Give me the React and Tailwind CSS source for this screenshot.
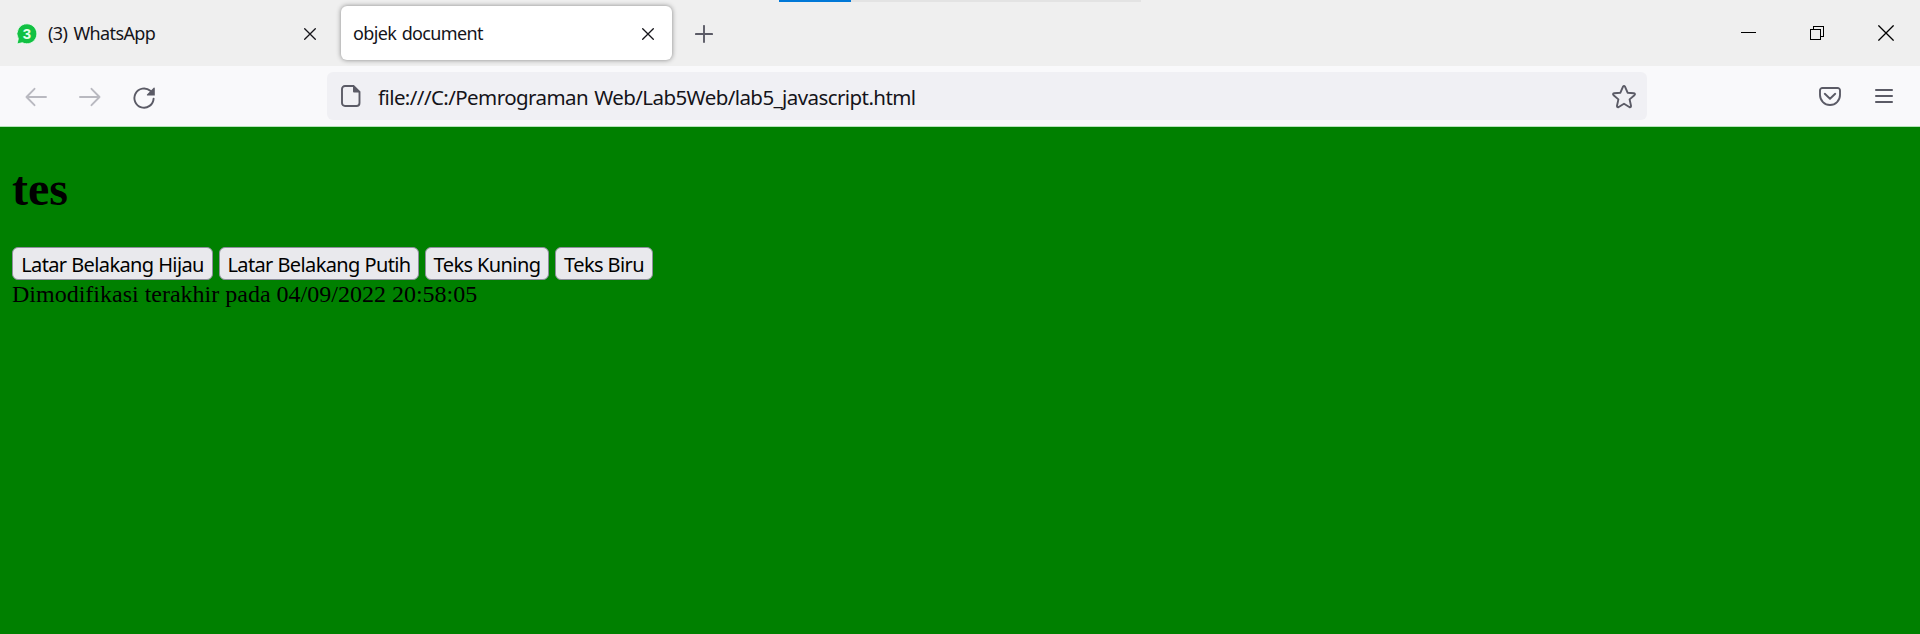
const buttons = [
  { label: 'Latar Belakang Hijau', width: 'w-[201px]' },
  { label: 'Latar Belakang Putih', width: 'w-[200px]' },
  { label: 'Teks Kuning', width: 'w-[124px]' },
  { label: 'Teks Biru', width: 'w-[98px]' },
];

function CloseIcon() {
  return (
    <svg className="h-3 w-3 shrink-0" viewBox="0 0 12 12" fill="none" stroke="#15141a" strokeWidth="1.3" strokeLinecap="round">
      <path d="M.7.7l10.6 10.6M11.3.7L.7 11.3" />
    </svg>
  );
}

function TabBar() {
  return (
    <div className="relative flex h-[66px] items-center bg-[#efefef] text-[18px] text-[#15141a]">
      <div className="absolute top-0 left-[779px] flex h-[2px] w-[362px] bg-[#e3e3e3]">
        <div className="w-[72px] bg-[#0078d7]" />
      </div>
      <div className="flex h-[54px] w-[341px] items-center pt-px pl-4">
        <svg className="h-[22px] w-[22px] shrink-0" viewBox="0 0 22 22">
          <path d="M11 .8a10 10 0 1 1-4.700 18.900L1 21l1.300-5.200A10 10 0 0 1 11 .8z" fill="#12c143" stroke="#f8fff9" strokeWidth=".8" />
          <text x="11" y="16.200" textAnchor="middle" fontFamily="Liberation Sans, sans-serif" fontWeight="700" fontSize="15" fill="#e6ffe9">3</text>
        </svg>
        <span className="ml-2.5 w-[256px] whitespace-nowrap tracking-[-0.6px] [word-spacing:2px]">(3) WhatsApp</span>
        <CloseIcon />
      </div>
      <div className="flex h-[54px] w-[331px] items-center rounded-md bg-white pt-px pl-3 shadow-[0_0_5px_rgba(0,0,0,0.45)]">
        <span className="w-[289px] whitespace-nowrap tracking-[-0.65px] [word-spacing:1.500px]">objek document</span>
        <CloseIcon />
      </div>
      <svg className="mt-[2px] ml-[23px] h-[18px] w-[18px]" viewBox="0 0 18 18" fill="none" stroke="#5b5b66" strokeWidth="1.9" strokeLinecap="round">
        <path d="M9 .9v16.2M.9 9h16.2" />
      </svg>
      <div className="ml-auto flex h-[18px] items-center pr-[26px]">
        <svg className="h-[16px] w-[15px]" viewBox="0 0 15 16" shapeRendering="crispEdges"><path d="M0 7h15v1H0z" fill="#000" /></svg>
        <svg className="ml-[54px] h-[14px] w-[14px]" viewBox="0 0 14 14" fill="none" stroke="#000" shapeRendering="crispEdges">
          <path d="M.5 3.5h10v10H.5zM3.500 3.500v-3h10v10h-3" />
        </svg>
        <svg className="ml-[54px] h-4 w-4" viewBox="0 0 16 16" fill="none" stroke="#000" strokeWidth="1.3"><path d="M.4.4l15.200 15.200M15.600.4L.4 15.600" /></svg>
      </div>
    </div>
  );
}

function Toolbar() {
  return (
    <div className="flex h-[61px] items-center border-b border-[#b5e3ba] bg-[#f9f9fb]">
      <div className="flex w-[327px] items-center pt-[2px] pl-[25px]">
        <svg className="h-5 w-[22px]" viewBox="0 0 22 20" fill="none" stroke="#b9b9c0" strokeWidth="1.9" strokeLinecap="round" strokeLinejoin="round">
          <path d="M21 10H1.500M9.500 1.800L1.500 10l8 8.200" />
        </svg>
        <svg className="ml-8 h-5 w-[22px]" viewBox="0 0 22 20" fill="none" stroke="#b9b9c0" strokeWidth="1.9" strokeLinecap="round" strokeLinejoin="round">
          <path d="M1 10h19.500M12.500 1.800l8 8.200-8 8.200" />
        </svg>
        <svg className="mt-[2px] ml-8 h-[22px] w-[22px]" viewBox="0 0 22 22">
          <path d="M20.600 11.600a9.600 9.600 0 1 1-3.300-7.800" fill="none" stroke="#5b5b66" strokeWidth="1.900" strokeLinecap="round" />
          <path d="M21.800 1.200v7.200h-7.400c-.5 0-.7-.6-.4-1l6.700-6.600c.4-.4 1.100-.1 1.100.4z" fill="#5b5b66" />
        </svg>
      </div>
      <div className="flex h-12 w-[1320px] items-center rounded-md bg-[#f0f0f4] pr-[11px] pl-[14px]">
        <svg className="h-[22px] w-[20px] shrink-0" viewBox="0 0 20 22">
          <path d="M4 1h8.500L18.500 6.800V18a3 3 0 0 1-3 3H4a3 3 0 0 1-3-3V4a3 3 0 0 1 3-3z" fill="none" stroke="#5b5b66" strokeWidth="1.900" />
          <path d="M12 .5v5.700c0 .8.500 1.300 1.300 1.300H19z" fill="#5b5b66" />
        </svg>
        <span className="mt-[3px] ml-[17px] text-[20.5px] whitespace-nowrap tracking-[-0.58px] text-[#15141a] [word-spacing:1.500px]">file:///C:/Pemrograman Web/Lab5Web/lab5_javascript.html</span>
        <svg className="mt-[2px] ml-auto h-6 w-6" viewBox="0 0 24 24" fill="none" stroke="#5b5b66" strokeWidth="1.900" strokeLinejoin="round">
          <path d="M10.900 1.800Q12 .2 13.100 1.800L15.600 7.700l6.300.6q1.800.4.500 1.900l-4.800 4.200 1.400 6.300q.1 2-1.700 1.300L12 18.700 6.700 22q-1.800.7-1.700-1.300l1.400-6.300-4.800-4.200Q.3 8.700 2.100 8.300l6.300-.6z" />
        </svg>
      </div>
      <div className="ml-auto flex items-center pr-[27px]">
        <svg className="mt-px h-[19px] w-[22px]" viewBox="0 0 22 19" fill="none" stroke="#5b5b66" strokeWidth="1.900" strokeLinecap="round" strokeLinejoin="round">
          <path d="M3.500 1h15A2.400 2.400 0 0 1 21 3.400V8a10 10 0 0 1-20 0V3.400A2.400 2.400 0 0 1 3.500 1zM5.800 6.800L11 11.800l5.200-5" />
        </svg>
        <svg className="ml-[34px] h-4 w-[18px]" viewBox="0 0 18 16" fill="none" stroke="#5b5b66" strokeWidth="1.800" strokeLinecap="round">
          <path d="M.9 2h16.200M.9 8h16.200M.9 14h16.200" />
        </svg>
      </div>
    </div>
  );
}

export default function App() {
  return (
    <div className="flex h-[634px] w-full flex-col overflow-hidden bg-[#008000] font-['Noto_Sans','Open_Sans',sans-serif]">
      <TabBar />
      <Toolbar />
      <main className="px-3 pt-[35px] font-['Liberation_Serif',serif] text-[24px] text-black">
        <h1 className="text-[48px] leading-[54px] font-bold">tes</h1>
        <div className="mt-[31px] flex gap-1.5">
          {buttons.map((b) => (
            <button key={b.label} className={`${b.width} flex h-[33px] items-center justify-center rounded-md border border-[#8f8f9d] bg-[#e9e9ed] pt-[2px] font-['Noto_Sans',sans-serif] text-[20px] leading-6 tracking-[-0.6px] whitespace-nowrap`}>
              {b.label}
            </button>
          ))}
        </div>
        <p className="pt-px leading-[27px]">Dimodifikasi terakhir pada 04/09/2022 20:58:05</p>
      </main>
    </div>
  );
}
